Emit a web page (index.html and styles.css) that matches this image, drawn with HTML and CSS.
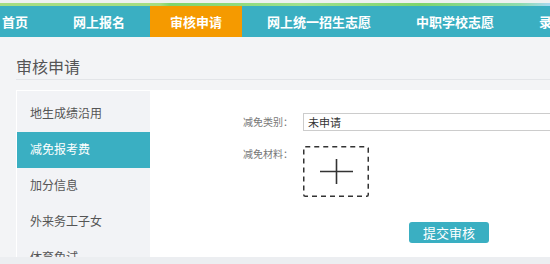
FILE: index.html
```html
<!DOCTYPE html>
<html lang="zh-CN">
<head>
    <meta charset="UTF-8">
    <meta name="viewport" content="width=device-width, initial-scale=1.0">
    <title>审核申请</title>
    <link rel="stylesheet" href="styles.css">
</head>
<body>

    <div class="page">
        <!-- Banner strip -->
        <div class="banner"></div>

        <!-- Main navigation -->
        <ul class="nav">
            <li>首页</li>
            <li>网上报名</li>
            <li class="active">审核申请</li>
            <li>网上统一招生志愿</li>
            <li>中职学校志愿</li>
            <li>录取查询</li>
        </ul>

        <div class="content">
            <h2 class="page-title">审核申请</h2>

            <div class="panel">
                <ul class="side-menu">
                    <li>地生成绩沿用</li>
                    <li class="active">减免报考费</li>
                    <li>加分信息</li>
                    <li>外来务工子女</li>
                    <li>体育免试</li>
                </ul>

                <div class="main">
                    <div class="form-row">
                        <label class="form-label">减免类别：</label>
                        <input class="form-input" type="text" value="未申请" readonly>
                    </div>
                    <div class="form-row top">
                        <label class="form-label">减免材料：</label>
                        <!-- Upload placeholder -->
                        <svg class="upload-box" width="66" height="51" viewBox="0 0 66 51">
                            <rect x="0.75" y="0.75" width="64.5" height="49.5" rx="1.5" fill="none" stroke="#333" stroke-width="1.5" stroke-dasharray="5 4"/>
                            <path d="M17 25.5 H50 M33.5 13 V38" stroke="#333" stroke-width="1.6" fill="none"/>
                        </svg>
                    </div>
                    <button class="submit-btn" type="button">提交审核</button>
                </div>
            </div>
        </div>
    </div>

</body>
</html>
```

FILE: styles.css
```css
body {
    font-family: "Noto Sans CJK SC", "Liberation Sans", sans-serif;
    background-color: #eceef1;
    margin: 0;
    padding: 0;
}

.page {
    height: 257px;
    overflow: hidden;
    background-color: #f3f4f6;
}

/* Top banner picture (grass strip) */
.banner {
    height: 6px;
    background:
        linear-gradient(to right, rgba(255,255,255,0) 0, rgba(255,255,255,0) 160px, #7fd46c 170px, #9fe08d 300px, #7fd46c 420px, #8fdcae 520px, #a8d8f0 550px),
        linear-gradient(to bottom, #eef1f0 0, #eef1f0 3px, #a5dd82 3px);
    background-size: 100% 3px, 100% 6px;
    background-position: 0 3px, 0 0;
    background-repeat: no-repeat;
}

.nav {
    list-style: none;
    margin: 0;
    padding: 0;
    display: flex;
    gap: 5px;
    height: 31px;
    background-color: #3aafc2;
    margin-left: -18px;
    white-space: nowrap;
}

.nav li {
    padding: 0 20px;
    line-height: 31px;
    font-size: 13px;
    font-weight: bold;
    color: #fff;
}

.nav li.active {
    background-color: #f59a00;
}

.content {
    padding-left: 16px;
}

.page-title {
    margin: 0;
    padding-top: 19px;
    padding-bottom: 2px;
    font-size: 16px;
    line-height: 21px;
    font-weight: normal;
    color: #555;
    border-bottom: 1px solid #e3e5e8;
}

.panel {
    display: flex;
    margin-top: 10px;
}

.side-menu {
    list-style: none;
    margin: 0;
    padding: 5px 0 0 0;
    width: 133px;
    border-left: 1px solid #fff;
    border-top: 1px solid #fff;
    background-color: #f2f3f6;
}

.side-menu li {
    height: 36px;
    line-height: 34px;
    padding-left: 13px;
    font-size: 12px;
    color: #555;
}

.side-menu li.active {
    background-color: #3aafc2;
    color: #fff;
}

.main {
    flex: 1;
    background-color: #fff;
    padding: 23px 0 0 93px;
    height: 180px;
}

.form-row {
    display: flex;
    align-items: center;
    gap: 10px;
    margin-bottom: 15px;
}

.form-row.top {
    align-items: flex-start;
}

.form-label {
    width: 50px;
    font-size: 10px;
    color: #777;
    line-height: 14px;
}

.form-row.top .form-label {
    margin-top: 1px;
}

.form-input {
    flex: 1;
    height: 18px;
    box-sizing: border-box;
    border: 1px solid #ccc;
    border-right: none;
    padding: 0 4px;
    font-family: inherit;
    font-size: 11px;
    color: #333;
    outline: none;
}

.upload-box {
    display: block;
}

.submit-btn {
    margin: 10px 0 0 166px;
    width: 80px;
    height: 21px;
    padding: 0;
    border: none;
    border-radius: 3px;
    background-color: #3aafc2;
    color: #fff;
    font-family: inherit;
    font-size: 13px;
    line-height: 21px;
    cursor: pointer;
}
```
